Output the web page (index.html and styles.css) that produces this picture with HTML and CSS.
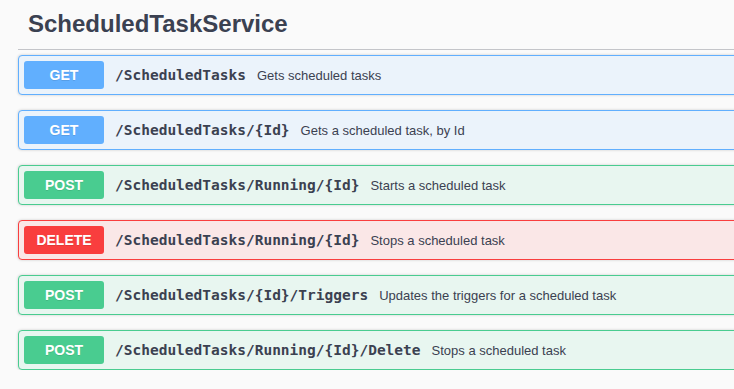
FILE: index.html
```html
<!DOCTYPE html>
<html lang="en">
  <head>
    <meta charset="UTF-8" />
    <meta name="viewport" content="width=device-width, initial-scale=1.0" />
    <title>ScheduledTaskService</title>
    <link rel="stylesheet" href="styles.css">
  </head>

  <body>
    <div class="tag-section">
      <h4 class="tag-title">ScheduledTaskService</h4>

      <div class="operations">
        <div class="opblock get">
          <span class="method">GET</span>
          <span class="path">/ScheduledTasks</span>
          <span class="summary">Gets scheduled tasks</span>
        </div>

        <div class="opblock get">
          <span class="method">GET</span>
          <span class="path">/ScheduledTasks/{Id}</span>
          <span class="summary">Gets a scheduled task, by Id</span>
        </div>

        <div class="opblock post">
          <span class="method">POST</span>
          <span class="path">/ScheduledTasks/Running/{Id}</span>
          <span class="summary">Starts a scheduled task</span>
        </div>

        <div class="opblock delete">
          <span class="method">DELETE</span>
          <span class="path">/ScheduledTasks/Running/{Id}</span>
          <span class="summary">Stops a scheduled task</span>
        </div>

        <div class="opblock post">
          <span class="method">POST</span>
          <span class="path">/ScheduledTasks/{Id}/Triggers</span>
          <span class="summary">Updates the triggers for a scheduled task</span>
        </div>

        <div class="opblock post">
          <span class="method">POST</span>
          <span class="path">/ScheduledTasks/Running/{Id}/Delete</span>
          <span class="summary">Stops a scheduled task</span>
        </div>
      </div>
    </div>
  </body>
</html>
```

FILE: styles.css
```css
body {
  font-family: "Liberation Sans", Arial, sans-serif;
  background-color: #fafafa;
  color: #3b4151;
  margin: 0;
  padding: 0;
  overflow: hidden;
}

.tag-section {
  margin-left: 18px;
  margin-right: -20px;
}

.tag-title {
  margin: 0 0 5px;
  padding: 10px 10px 11px;
  font-size: 24px;
  line-height: 28px;
  font-weight: bold;
  color: #3b4151;
  border-bottom: 1px solid #c4c5c9;
}

.operations {
  display: flex;
  flex-direction: column;
  gap: 15px;
}

.opblock {
  display: flex;
  align-items: center;
  padding: 5px;
  border: 1px solid;
  border-radius: 4px;
  box-shadow: 0 0 3px rgba(0, 0, 0, 0.19);
}

.method {
  min-width: 80px;
  height: 28px;
  line-height: 28px;
  box-sizing: border-box;
  text-align: center;
  border-radius: 3px;
  color: #ffffff;
  font-size: 14px;
  font-weight: bold;
  text-shadow: 0 1px 0 rgba(0, 0, 0, 0.1);
}

.path {
  padding: 0 11px;
  font-family: "DejaVu Sans Mono", monospace;
  font-size: 14.5px;
  font-weight: bold;
  color: #3b4151;
}

.summary {
  font-size: 13px;
  color: #3b4151;
}

.opblock.get {
  background-color: #ebf3fb;
  border-color: #61affe;
}

.opblock.get .method {
  background-color: #61affe;
}

.opblock.post {
  background-color: #e8f6f0;
  border-color: #49cc90;
}

.opblock.post .method {
  background-color: #49cc90;
}

.opblock.delete {
  background-color: #fae7e7;
  border-color: #f93e3e;
}

.opblock.delete .method {
  background-color: #f93e3e;
}
```
